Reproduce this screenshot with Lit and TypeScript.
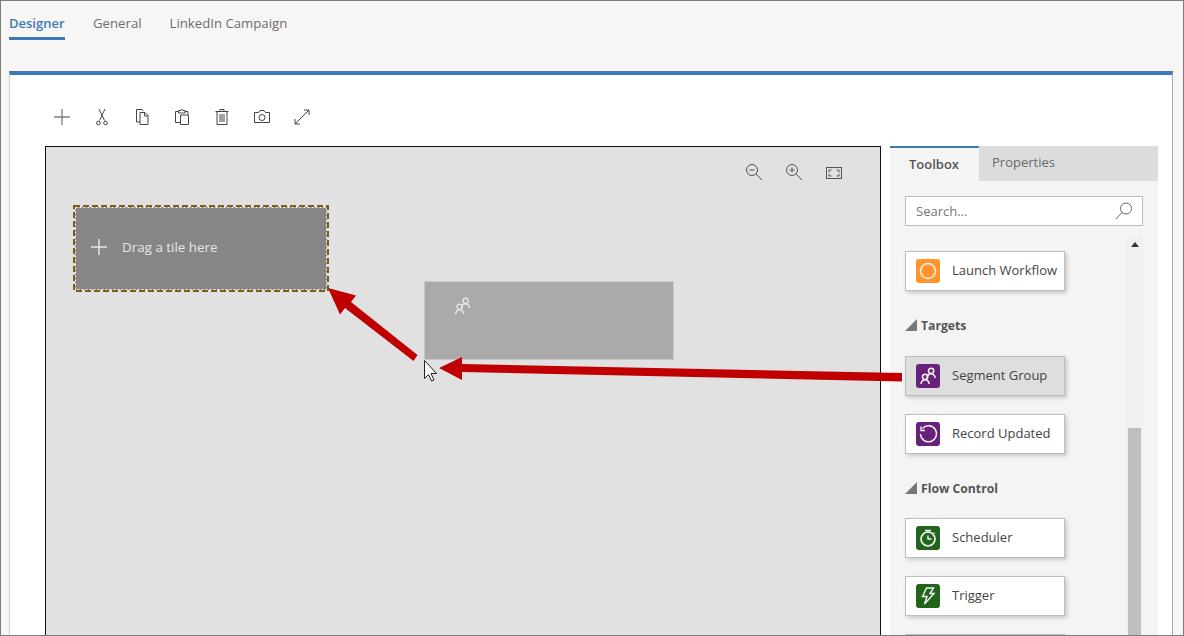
import { LitElement, html, css, svg } from 'lit';
import { customElement } from 'lit/decorators.js';

const stroke = (body: unknown, size = 20, vb = 20) => html`<svg width=${size} height=${size} viewBox="0 0 ${vb} ${vb}" fill="none" stroke="currentColor" stroke-width="1">${body}</svg>`;

const toolIcons = [
  stroke(svg`<path d="M10 2v16M2 10h16" stroke-width="1.300" opacity=".7"/>`),
  stroke(svg`<path d="M7 2l5.500 11.500M13 2L7.500 13.500"/><circle cx="6.500" cy="16" r="1.800"/><circle cx="13.500" cy="16" r="1.800"/>`),
  stroke(svg`<path d="M8 15H4.500V2.500H10l1.500 1.500"/><path d="M8 5.500h5l3 3V17.500H8z"/><path d="M12.500 5.500v3.500h3.500"/>`),
  stroke(svg`<path d="M8 15.500H3.500V4.500h3M13 4.500h3v3"/><path d="M6.500 6V3.500H9a1 1 0 0 1 2 0h2V6z"/><path d="M8.500 8h8v9.500h-8z"/>`),
  stroke(svg`<path d="M3.500 4.500h13M8 4.500V2.500h4v2M5 4.500V17.500h10V4.500M8 7v8M10 7v8M12 7v8"/>`),
  stroke(svg`<path d="M2.500 5.500h4l1.500-2h4l1.500 2h4v10h-15z"/><circle cx="10" cy="10.500" r="3"/>`),
  stroke(svg`<path d="M3 17L17 3M12 3h5v5M3 12v5h5"/>`),
];

const zoomOut = stroke(svg`<circle cx="8" cy="7" r="5.500"/><path d="M5.500 7h5M12 11l6 6"/>`);
const zoomIn = stroke(svg`<circle cx="8" cy="7" r="5.500"/><path d="M5.500 7h5M8 4.500v5M12 11l6 6"/>`);
const fit = stroke(svg`<rect x="2.500" y="4.500" width="15" height="11"/><path d="M5 9.500V7h2.500M12.500 7H15v2.500M15 11v2h-2.500M7.500 13H5v-2"/>`);
const search = stroke(svg`<circle cx="12" cy="7.500" r="5.500"/><path d="M8 11.500L2 18"/>`);

const people = svg`<circle cx="13" cy="6.500" r="2.200"/><path d="M9.500 12.500c.4-2 1.500-3.500 3.500-3.500s3 1.500 3.500 3.500"/><circle cx="8" cy="11.500" r="2.200"/><path d="M4.500 17.500c.4-2 1.500-3.500 3.500-3.500s3.100 1.500 3.500 3.500"/>`;

const glyphs: Record<string, unknown> = {
  workflow: svg`<circle cx="12" cy="12" r="7.500" stroke-width="1.500"/>`,
  segment: svg`<g transform="translate(-.5 -1) scale(1.200)" stroke-width="1.300">${people}</g>`,
  record: svg`<path d="M6.500 6.500A8 8 0 1 1 4.500 12" stroke-width="1.500"/><path d="M5 4.500v4h4" stroke-width="1.400"/>`,
  scheduler: svg`<circle cx="12" cy="13" r="7" stroke-width="1.700"/><path d="M9 4.500h6M12 4.500v2M12 9.500v3.500h3.500" stroke-width="1.400"/><path d="M17.500 6l1.500 1.500"/>`,
  trigger: svg`<path d="M10.500 4h7l-3.500 5.500h4L8.500 20l2.500-7.500H6.500z" stroke-width="1.400"/>`,
};

@customElement('app-root')
export class AppRoot extends LitElement {
  static styles = css`
    :host {
      display: block;
      height: 636px;
      font-family: 'Open Sans', 'Noto Sans', sans-serif;
      color: #333;
    }
    * { box-sizing: border-box; }
    .page {
      position: relative;
      height: 636px;
      overflow: hidden;
      background: #f7f6f5;
      border: 1px solid #7d7d7d;
      padding: 0 10px 0 8px;
      display: flex;
      flex-direction: column;
    }
    .tabs {
      height: 70px;
      flex: none;
      display: flex;
      gap: 28px;
      font-size: 13.200px;
      color: #6d6d6d;
    }
    .tabs div {
      height: 39px;
      padding-top: 13px;
      line-height: 18px;
      white-space: nowrap;
    }
    .tabs .on {
      width: 56px;
      font-size: 13px;
      color: #3b79b7;
      font-weight: 600;
      border-bottom: 3px solid #3b79b7;
    }
    .panel {
      flex: 1;
      min-height: 0;
      background: #fff;
      border-top: 4px solid #3b79b7;
      border-left: 1px solid #d0d0d0;
      border-right: 1px solid #a8a8a8;
      padding: 0 14px 0 32px;
    }
    .tools {
      height: 71px;
      display: flex;
      align-items: flex-start;
      padding-top: 32px;
      color: #444;
    }
    .tools span {
      width: 40px;
      height: 20px;
      display: flex;
      justify-content: center;
    }
    .work {
      display: flex;
      gap: 9px;
      margin-left: 3px;
      height: 600px;
    }
    .canvas {
      position: relative;
      width: 836px;
      flex: none;
      background: #e1e1e1;
      border: 1px solid #111;
      border-bottom: none;
    }
    .zoom {
      display: flex;
      gap: 20px;
      justify-content: flex-end;
      padding: 16px 36px 0 0;
      color: #555;
    }
    .drop {
      position: absolute;
      left: 27px;
      top: 58px;
      width: 256px;
      height: 87px;
      display: flex;
      align-items: center;
      padding: 0 0 4px 16px;
      gap: 13px;
      color: #e6e6e6;
      font-size: 13.400px;
    }
    .drop > * { position: relative; }
    .drop .edge {
      position: absolute;
      left: 0;
      top: 0;
    }
    .ghost {
      position: absolute;
      left: 378px;
      top: 134px;
      width: 250px;
      height: 79px;
      background: #aaa;
      border: 1px solid #c8c8c8;
      color: #e4e4e4;
      padding: 11px 0 0 25px;
    }
    .side {
      width: 268px;
      flex: none;
      background: #f4f4f4;
    }
    .side-tabs {
      display: flex;
      height: 35px;
      background: #dcdcdc;
      font-size: 13px;
      color: #6a6a6a;
    }
    .side-tabs div {
      padding: 7px 13px 0;
      line-height: 18px;
    }
    .side-tabs .on {
      width: 89px;
      padding: 7px 0 0 19px;
      background: #f4f4f4;
      border-top: 2px solid #3b79b7;
      color: #555;
      font-weight: 600;
    }
    .search {
      margin: 15px 15px 10px;
      height: 30px;
      background: #fff;
      border: 1px solid #bdbdbd;
      display: flex;
      align-items: center;
      justify-content: space-between;
      padding: 0 8px 0 10px;
      font-size: 13px;
      color: #777;
    }
    .search svg { color: #666; }
    .list {
      position: relative;
      margin-left: 15px;
      width: 238px;
      height: 420px;
      padding-top: 15px;
    }
    .bar {
      position: absolute;
      top: 0;
      right: 0;
      bottom: 0;
      width: 17px;
      background: #f0f0f0;
    }
    .bar i {
      position: absolute;
      top: 6px;
      left: 5px;
      border: 4px solid transparent;
      border-top: none;
      border-bottom: 5px solid #333;
    }
    .bar b {
      position: absolute;
      top: 192px;
      left: 2px;
      right: 2px;
      bottom: 0;
      background: #bfbfbf;
    }
    .card {
      width: 160px;
      height: 40px;
      background: #fff;
      border: 1px solid #bdbdbd;
      box-shadow: 2px 2px 4px rgba(0, 0, 0, .18);
      display: flex;
      align-items: center;
      gap: 12px;
      padding-left: 10px;
      margin-bottom: 18px;
      font-size: 13px;
      color: #444;
      white-space: nowrap;
    }
    .card.hot { background: #dedede; }
    .card .label { padding-bottom: 2px; }
    .ico {
      width: 24px;
      height: 24px;
      border-radius: 3px;
      flex: none;
      color: #f2f2f2;
      display: flex;
    }
    .orange { background: #ff952b; }
    .purple { background: #68217a; }
    .green { background: #22651a; }
    .head {
      display: flex;
      align-items: center;
      gap: 4px;
      height: 18px;
      margin: 25px 0 22px;
      font-size: 12.200px;
      font-weight: 700;
      color: #555;
    }
    .head.flow { margin-bottom: 21px; }
    .head i {
      width: 0;
      height: 0;
      border-left: 12px solid transparent;
      border-bottom: 12px solid #777;
    }
    .overlay {
      position: absolute;
      left: -1px;
      top: -1px;
      pointer-events: none;
    }
  `;

  private card(name: string, tone: string, glyph: string, hot = false) {
    return html`<div class="card ${hot ? 'hot' : ''}">
      <span class="ico ${tone}">
        <svg width="24" height="24" viewBox="0 0 24 24" fill="none" stroke="currentColor">${glyphs[glyph]}</svg>
      </span>
      <span class="label">${name}</span>
    </div>`;
  }

  render() {
    return html`<div class="page">
      <div class="tabs">
        <div class="on">Designer</div>
        <div>General</div>
        <div>LinkedIn Campaign</div>
      </div>
      <div class="panel">
        <div class="tools">${toolIcons.map((i) => html`<span>${i}</span>`)}</div>
        <div class="work">
          <div class="canvas">
            <div class="zoom">${zoomOut}${zoomIn}${fit}</div>
            <div class="drop">
              <svg class="edge" width="256" height="87" viewBox="0 0 256 87" fill="none">
                <rect x="2" y="2" width="252" height="83" fill="#868686"/>
                <rect x="1" y="1" width="254" height="85" stroke="#7a5f10" stroke-width="2" stroke-dasharray="6 3"/>
                <rect x="2.500" y="2.500" width="251" height="82" stroke="#f4f4f4" stroke-width="1" stroke-dasharray="2 2"/>
              </svg>
              ${stroke(svg`<path d="M10 2v16M2 10h16" stroke-width="1.500"/>`)}
              <span>Drag a tile here</span>
            </div>
            <div class="ghost">
              <svg width="24" height="24" viewBox="0 0 20 20" fill="none" stroke="currentColor" stroke-width="1.200">${people}</svg>
            </div>
          </div>
          <div class="side">
            <div class="side-tabs">
              <div class="on">Toolbox</div>
              <div>Properties</div>
            </div>
            <div class="search"><span>Search...</span>${search}</div>
            <div class="list">
              <div class="bar"><i></i><b></b></div>
              ${this.card('Launch Workflow', 'orange', 'workflow')}
              <div class="head"><i></i>Targets</div>
              ${this.card('Segment Group', 'purple', 'segment', true)}
              ${this.card('Record Updated', 'purple', 'record')}
              <div class="head flow"><i></i>Flow Control</div>
              ${this.card('Scheduler', 'green', 'scheduler')}
              ${this.card('Trigger', 'green', 'trigger')}
              <div class="card"></div>
            </div>
          </div>
        </div>
      </div>
      <svg class="overlay" width="1184" height="636" viewBox="0 0 1184 636">
        <path d="M424.500 360.500v18l4-4 3 6.500 2.500-1-3-6.500h5.500z" fill="#fff" stroke="#222" stroke-width="1"/>
        <path d="M902 373L462 364V357L439 368l23 12V372L902 381.500z" fill="#c00000"/>
        <path d="M417.500 355L351 302l5-6.500L328 288l12 26.500 5-6.500 68.500 53z" fill="#c00000"/>
      </svg>
    </div>`;
  }
}
